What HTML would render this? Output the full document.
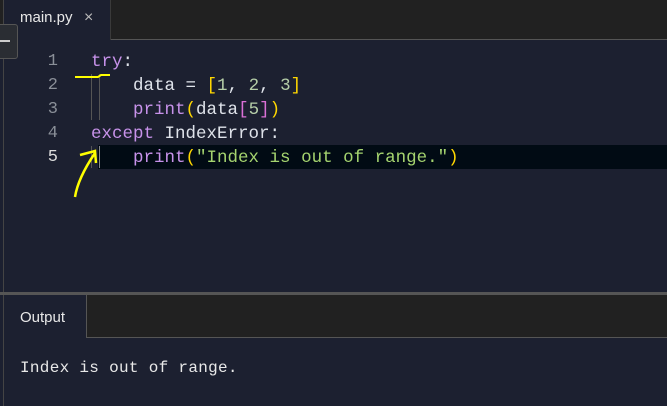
<!DOCTYPE html>
<html><head><meta charset="utf-8"><style>
body{margin:0;width:667px;height:406px;background:#1c2030;position:relative;overflow:hidden;font-family:"Liberation Sans",sans-serif}
.abs{position:absolute}
.code{font-family:"Liberation Mono",monospace;font-size:17.5px;white-space:pre;color:#dfe3ea}
.k{color:#c792ea}.b{color:#ffd700}.n{color:#b5cea8}.p{color:#da70d6}.s{color:#a5d46f}
.ln{font-family:"Liberation Mono",monospace;font-size:17px;color:#8a8f98;text-align:right;width:20px}
</style></head><body>
<div class="abs" style="left:0;top:0;width:667px;height:39px;background:#212121;border-bottom:1px solid #555"></div>
<div class="abs" style="left:4px;top:0;width:106px;height:40px;background:#1c2030;border-right:1px solid #3a3a3a"></div>
<div class="abs" style="left:3px;top:0;width:1px;height:406px;background:#444"></div>
<div class="abs" style="left:20px;top:9px;color:#e8e8e8;font-size:15px">main.py</div>
<div class="abs" style="left:84px;top:9px;color:#bbb;font-size:16px">×</div>
<div class="abs" style="left:-4px;top:24px;width:20px;height:33px;background:#2a2d33;border:1px solid #555;border-radius:3px"></div>
<div class="abs" style="left:0;top:40px;width:10px;height:2px;background:#ccc"></div>

<div class="abs" style="left:98px;top:145px;width:569px;height:24px;background:#010b14"></div>
<div class="abs" style="left:91px;top:74px;width:1px;height:46px;background:#555"></div>
<div class="abs" style="left:99px;top:74px;width:1px;height:46px;background:#555"></div>
<div class="abs" style="left:91px;top:146px;width:1px;height:22px;background:#555"></div>
<div class="abs" style="left:99px;top:146px;width:1px;height:22px;background:#888"></div>

<div class="abs ln" style="left:38px;top:50px;line-height:24px">1<br>2<br>3<br>4<br><span style="color:#ddd">5</span></div>
<div class="abs code" style="left:91px;top:50px;line-height:24px"><span class="k">try</span>:
    data = <span class="b">[</span><span class="n">1</span>, <span class="n">2</span>, <span class="n">3</span><span class="b">]</span>
    <span class="k">print</span><span class="b">(</span>data<span class="p">[</span><span class="n">5</span><span class="p">]</span><span class="b">)</span>
<span class="k">except</span> IndexError:
    <span class="k">print</span><span class="b">(</span><span class="s">"Index is out of range."</span><span class="b">)</span></div>

<svg class="abs" style="left:0;top:0" width="667" height="406">
<path d="M75 77 L98 77 L101 75 L110 75" stroke="#ffff00" stroke-width="2" fill="none"/>
<path d="M75 197 Q78 178 95 153 M80 155 L95 151 L96 163" stroke="#ffff00" stroke-width="2.5" fill="none"/>
</svg>

<div class="abs" style="left:0;top:292px;width:667px;height:3px;background:#555"></div>
<div class="abs" style="left:86px;top:295px;width:581px;height:42px;background:#212121;border-left:1px solid #555;border-bottom:1px solid #555"></div>
<div class="abs" style="left:20px;top:309px;color:#e8e8e8;font-size:15px">Output</div>
<div class="abs" style="left:20px;top:359px;font-family:'Liberation Mono',monospace;font-size:16px;letter-spacing:0.3px;color:#e8e8e8;white-space:pre">Index is out of range.</div>
</body></html>
